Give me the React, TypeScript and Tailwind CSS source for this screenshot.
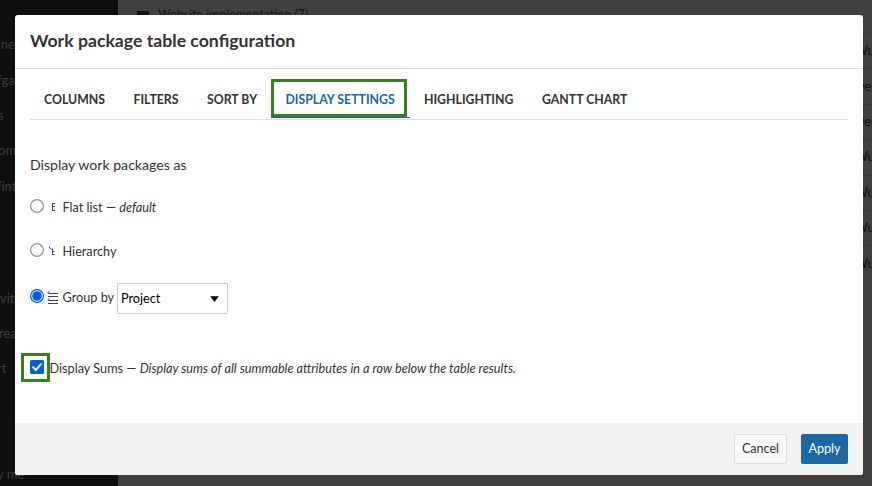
import type { ReactNode } from 'react';

const sidebarItems = [
  { text: 'Online', top: 'mt-[33px]', pull: '-ml-[23px]' },
  { text: 'Aufgaben', top: 'mt-[14px]', pull: '-ml-[19px]' },
  { text: 's', top: 'mt-[13px]', pull: '-ml-[2px]' },
  { text: 'Komm', top: 'mt-[13px]', pull: '-ml-[10px]' },
  { text: 'Winter', top: 'mt-[14px]', pull: '-ml-[12px]' },
  { text: 'vity', top: 'mt-[90px]', pull: 'ml-0' },
  { text: 'reate', top: 'mt-[13px]', pull: '-ml-px' },
  { text: 'rt', top: 'mt-[13px]', pull: '-ml-[3px]' },
  { text: 'y me', top: 'mt-[84px]', pull: '-ml-[3px]' },
];

const rows = ['Wu', 'ver', 'ver', 'Wu', 'Wu', 'Wu', 'Wu'];

function Page() {
  return (
    <div className="flex h-full">
      <div className="w-[118px] shrink-0 overflow-hidden bg-[#0d0f0e] text-[13px] leading-[22px] text-[#3e3f3f]">
        {sidebarItems.map((item) => (
          <div key={item.text} className={`whitespace-nowrap ${item.top} ${item.pull}`}>
            {item.text}
          </div>
        ))}
      </div>
      <div className="flex grow justify-between overflow-hidden bg-[#404040] text-[#0c0c0c]">
        <div className="flex h-[30px] items-center pl-[19px] text-[12.4px]">
          <span className="mr-[9px] h-2 w-3 bg-[#111]" />
          <span className="text-[#151515]">Website implementation (7)</span>
        </div>
        <div className="mt-[33px] w-[17px] text-[12.6px]">
          {rows.map((row, i) => (
            <div key={i} className="flex h-[35.4px] items-center border-t border-[#393939] pt-px">
              <span className={row === 'ver' ? 'pl-[3px]' : 'pl-0'}>{row}</span>
            </div>
          ))}
        </div>
      </div>
    </div>
  );
}

function Tab({ children }: { children: ReactNode }) {
  return <div className="whitespace-nowrap pt-[11px]">{children}</div>;
}

function Radio({ checked = false }: { checked?: boolean }) {
  return (
    <svg className="-mt-[3px] h-[14px] w-[14px] shrink-0" viewBox="0 0 14 14" fill="none">
      <circle cx="7" cy="7" r="6.4" stroke={checked ? '#0060df' : '#8f8f9d'} strokeWidth="1.2" />
      {checked && <circle cx="7" cy="7" r="4.8" fill="#0060df" />}
    </svg>
  );
}

function FlatIcon() {
  return (
    <svg className="ml-[7px] h-[9px] w-[5px]" viewBox="0 0 5 9" fill="none" stroke="#4d4d58" shapeRendering="crispEdges">
      <path d="M1.5 0V8M1 .5H4M1 3.5H4M1 7.5H4" />
    </svg>
  );
}

function HierarchyIcon() {
  return (
    <svg className="ml-[5px] h-[10px] w-[6px]" viewBox="0 0 6 10" fill="none" stroke="#444">
      <path d="M.5 .5V2L2.5 3.5M3.5 2.5V8.5H5.5M3.5 5.5H5.5" />
    </svg>
  );
}

function GroupIcon() {
  return (
    <svg className="ml-[3px] h-[13px] w-[12px]" viewBox="0 0 12 13" fill="none" stroke="#3c3c44">
      <path d="M2.5 .5L.8 1.8L2.5 2.5M2 2.5H11M1 5.5H11M2.5 7.5L.8 8.8L2.5 9.5M2 9.5H11M1 12.5H11" />
    </svg>
  );
}

export default function App() {
  return (
    <div className="relative h-[486px] w-[872px] overflow-hidden font-['Lato',sans-serif]">
      <Page />
      <div className="absolute inset-0 flex items-start pl-[15px] pt-[15px]">
        <div className="flex h-[460px] w-[848px] flex-col overflow-hidden rounded-[3px] bg-white text-[#333]">
          <header className="flex h-[54px] items-center border-b border-[#ddd] pb-px pl-[15px] text-[17.66px] font-bold">
            Work package table configuration
          </header>
          <main className="grow px-[15px]">
            <nav className="flex h-[51px] border-b border-[#ddd] pl-[14px] pt-[10px] text-[12.3px] font-bold leading-[19px]">
              <div className="w-[89.5px]"><Tab>COLUMNS</Tab></div>
              <div className="w-[73.5px]"><Tab>FILTERS</Tab></div>
              <div className="w-[64px]"><Tab>SORT BY</Tab></div>
              <div className="h-[39px] w-[139px] border-b border-[#1a5f96]">
                <div className="h-[38px] w-[136px] whitespace-nowrap border-[3px] border-[#35801f] pl-[11.5px] pt-[8px] text-[#1a67a3]">
                  DISPLAY SETTINGS
                </div>
              </div>
              <div className="w-[132px] pl-[14px]"><Tab>HIGHLIGHTING</Tab></div>
              <Tab>GANTT CHART</Tab>
            </nav>
            <h2 className="mt-[35px] text-[14.1px] leading-5">Display work packages as</h2>
            <div className="text-[12.7px] leading-5">
              <label className="mt-[22px] flex h-5 items-center">
                <Radio />
                <FlatIcon />
                <span className="ml-[6.5px]">Flat list — <i>default</i></span>
              </label>
              <label className="mt-6 flex h-5 items-center">
                <Radio />
                <HierarchyIcon />
                <span className="ml-[7.5px]">Hierarchy</span>
              </label>
              <div className="mt-[22px] flex h-[31px] items-center">
                <div className="-mt-[3px] flex w-[87px] items-center">
                  <Radio checked />
                  <GroupIcon />
                  <span className="ml-[3.5px] whitespace-nowrap">Group by</span>
                </div>
                <div className="flex h-[31px] w-[111px] items-center justify-between rounded-[1px] border border-[#ccc] pl-[3px] pr-2 text-black">
                  <span className="-mt-[2px]">Project</span>
                  <svg className="h-[6px] w-[9px]" viewBox="0 0 9 6"><path d="M.3.2H8.7L4.5 6Z" /></svg>
                </div>
              </div>
              <div className="-ml-[9px] mt-[39px] flex h-[29px] items-center">
                <div className="flex h-[29px] w-[29px] items-start border-[3px] border-[#35801f] pl-[6px] pt-[4px]">
                  <svg className="h-[14px] w-[14px]" viewBox="0 0 14 14">
                    <rect width="14" height="14" rx="1.5" fill="#0060df" />
                    <path d="M3 7.2L5.8 10L11 4.2" fill="none" stroke="white" strokeWidth="1.9" strokeLinecap="round" />
                  </svg>
                </div>
                <span className="-ml-[0.5px]">Display Sums — <i>Display sums of all summable attributes in a row below the table results.</i></span>
              </div>
            </div>
          </main>
          <footer className="flex h-[52px] shrink-0 items-center justify-end gap-[14px] bg-[#f2f2f2] pr-[15px] text-[12.6px]">
            <button className="h-[30px] w-[53px] rounded-[2px] border border-[#ddd] bg-[#f8f8f8] text-[#333]">Cancel</button>
            <button className="h-[30px] w-[47px] rounded-[2px] bg-[#1a67a3] text-white">Apply</button>
          </footer>
        </div>
      </div>
    </div>
  );
}
